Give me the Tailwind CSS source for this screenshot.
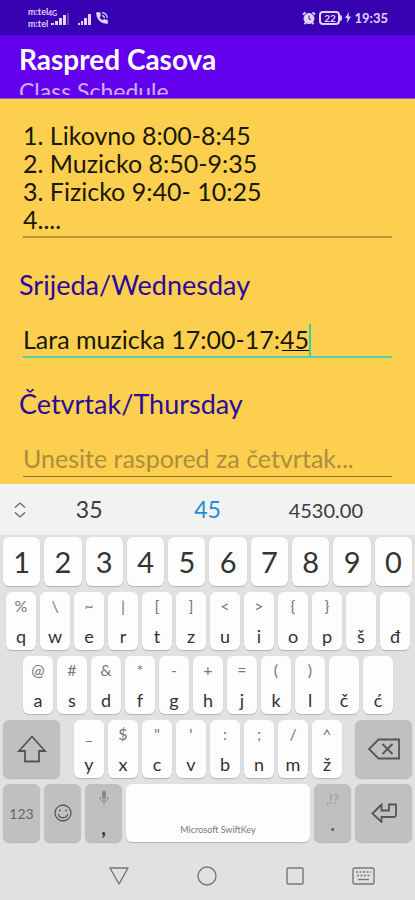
<!DOCTYPE html>
<html lang="bs">
<head>
<meta charset="utf-8">
<meta name="viewport" content="width=device-width, initial-scale=1">
<title>Raspred Casova</title>
<script src="https://cdn.jsdelivr.net/npm/@tailwindcss/browser@4"></script>
</head>
<body class="min-h-screen flex flex-col bg-[#e1e1e1] font-['Lato','Noto_Sans',sans-serif] text-[#333]">

<!-- System status bar -->
<div class="h-[35px] shrink-0 bg-[#3700b0] flex items-center justify-between pl-7 pr-[27px] text-[#e0d4fa]">
  <div class="flex items-center">
    <div class="flex flex-col text-[9px] leading-3 font-bold"><span>m:tel</span><span>m:tel</span></div>
    <svg class="w-[22px] h-5" viewBox="0 0 22 20" fill="currentColor" aria-hidden="true">
      <text x="0" y="8" font-size="7" font-weight="700">4G</text>
      <path d="M3 15h3v2H3zM7 13h3v4H7zM11 10h3v7h-3zM15 7h3v10h-3z"/><path opacity=".3" d="M19 5h2v12h-2z"/>
    </svg>
    <svg class="w-[14px] h-5 ml-2" viewBox="0 0 14 20" fill="currentColor" aria-hidden="true">
      <path d="M0 15h2v2H0zM3 13h2v4H3zM6 10h3v7H6zM10 6h3v11h-3z"/>
    </svg>
    <svg class="w-[14px] h-[14px] ml-[3px]" viewBox="0 0 24 24" fill="currentColor" aria-hidden="true">
      <path stroke="currentColor" stroke-width="2" d="M20 15.500c-1.200 0-2.400-.2-3.600-.6-.3-.1-.7 0-1 .2l-2.200 2.200c-2.800-1.400-5.100-3.800-6.600-6.600l2.200-2.200c.3-.3.400-.7.200-1-.3-1.100-.5-2.300-.5-3.500 0-.6-.4-1-1-1H4c-.6 0-1 .4-1 1 0 9.400 7.600 17 17 17 .6 0 1-.4 1-1v-3.500c0-.6-.4-1-1-1z"/>
      <path fill="none" stroke="currentColor" stroke-width="2.200" d="M12 8a4 4 0 0 1 4 4M12 3a9 9 0 0 1 9 9"/>
    </svg>
  </div>
  <div class="flex items-center">
    <svg class="w-[14px] h-[14px]" viewBox="0 0 14 14" fill="none" stroke="currentColor" aria-hidden="true">
      <circle cx="7" cy="7.500" r="5" fill="currentColor"/><path stroke-width="2" d="M1 3.500l2.500-2M13 3.500l-2.500-2M2.500 13l1.500-1.500M11.500 13l-1.500-1.500"/><path stroke="#3700b0" d="M7 4.500v3.300l2 1"/>
    </svg>
    <div class="ml-[3px] w-[21px] h-[14px] rounded-[4px] border-2 border-current text-[10px] leading-[10px] text-center font-bold">22</div>
    <div class="w-[2px] h-[6px] bg-current rounded-r"></div>
    <svg class="w-[6px] h-[11px] mx-[3px]" viewBox="0 0 6 11" fill="currentColor" aria-hidden="true"><path d="M4 0L0 6h2.500L2 11l4-6.500H3.500z"/></svg>
    <time class="text-[13px] leading-4 font-bold">19:35</time>
  </div>
</div>

<!-- App bar -->
<header class="h-16 shrink-0 bg-[#6200ee] text-white px-[19px] pt-2 border-b border-[#9a63b8]">
  <h1 class="text-[28px] leading-8 font-bold">Raspred Casova</h1>
  <p class="h-5 overflow-hidden text-[23px] leading-8 text-white/70">Class Schedule</p>
</header>

<!-- Schedule form -->
<main class="shrink-0 bg-[#fcd04e] px-[19px] pt-[22px] pb-[7px] text-[#1a1608]">
  <div class="mx-1">
    <textarea aria-label="Utorak/Tuesday" rows="4" class="block w-full resize-none overflow-hidden outline-none border-b-2 border-[#b8953b] h-[117px] text-[25px] leading-7">1. Likovno 8:00-8:45
2. Muzicko 8:50-9:35
3. Fizicko 9:40- 10:25
4....</textarea>
  </div>
  <label for="wed" class="block mt-[31px] text-[27px] leading-8 text-[#2b0a9c]">Srijeda/Wednesday</label>
  <div class="mx-1 mt-5 border-b-2 border-[#4fd3a5] h-[37px]">
    <div class="relative w-fit">
      <input id="wed" type="text" value="Lara muzicka 17:00-17:45" class="block field-sizing-content outline-none text-[25px] leading-9 h-9">
      <span class="absolute right-0 bottom-[6px] w-[27px] h-px bg-black"></span>
      <span class="absolute -right-[2px] bottom-[1px] w-[2px] h-8 bg-[#35cfa5]"></span>
    </div>
  </div>
  <label for="thu" class="block mt-[30px] text-[27px] leading-8 text-[#2b0a9c]">Četvrtak/Thursday</label>
  <div class="mx-1 mt-5 border-b border-[#8d7433]">
    <input id="thu" type="text" placeholder="Unesite raspored za četvrtak..." class="block w-full outline-none text-[25px] leading-9 h-9 placeholder:text-[#a98e3f]">
  </div>
</main>

<!-- Keyboard suggestions -->
<div class="h-[51px] shrink-0 bg-[#f2f2f2] flex items-center pl-[14px] pr-[30px] text-[23px] text-[#3c3c3c]">
  <button aria-label="Proširi" class="w-3"><svg class="w-3 h-4" viewBox="0 0 12 16" fill="none" stroke="#666" stroke-width="1.300" aria-hidden="true"><path d="M1 5.500l5-4.500 5 4.500M1 10.500l5 4.500 5-4.500"/></svg></button>
  <div class="flex-1 grid grid-cols-3 items-center pl-1">
    <button>35</button><button class="text-[#1a8fd6]">45</button><button class="text-[20px]">4530.00</button>
  </div>
</div>

<!-- Keyboard -->
<div class="pt-[2px] shrink-0 flex flex-col gap-[6px] [&_button]:rounded-[6px] [&_button]:shadow-[0_1px_1px_rgba(0,0,0,0.2)]">
  <div class="grid grid-cols-10 gap-1 px-[3px] text-[29px] [&>button]:h-[49px] [&>button]:bg-[#fdfdfd]">
    <button>1</button><button>2</button><button>3</button><button>4</button><button>5</button><button>6</button><button>7</button><button>8</button><button>9</button><button>0</button>
  </div>
  <div class="grid grid-cols-12 gap-1 pl-[6px] pr-[5px] text-[18px] [&>button]:h-[58px] [&>button]:bg-[#fdfdfd] [&>button]:flex [&>button]:flex-col [&>button]:items-center [&>button]:pt-1 [&_span]:h-7 [&_span]:text-[16px] [&_span]:leading-5 [&_span]:text-[#777]">
    <button><span>%</span>q</button><button><span>\</span>w</button><button><span>~</span>e</button><button><span>|</span>r</button><button><span>[</span>t</button><button><span>]</span>z</button><button><span>&lt;</span>u</button><button><span>&gt;</span>i</button><button><span>{</span>o</button><button><span>}</span>p</button><button><span></span>š</button><button><span></span>đ</button>
  </div>
  <div class="grid grid-cols-11 gap-1 pl-[23px] pr-[22px] text-[18px] [&>button]:h-[58px] [&>button]:bg-[#fdfdfd] [&>button]:flex [&>button]:flex-col [&>button]:items-center [&>button]:pt-1 [&_span]:h-7 [&_span]:text-[16px] [&_span]:leading-5 [&_span]:text-[#777]">
    <button><span>@</span>a</button><button><span>#</span>s</button><button><span>&amp;</span>d</button><button><span>*</span>f</button><button><span>-</span>g</button><button><span>+</span>h</button><button><span>=</span>j</button><button><span>(</span>k</button><button><span>)</span>l</button><button><span></span>č</button><button><span></span>ć</button>
  </div>
  <div class="flex px-[3px] text-[18px]">
    <button aria-label="Shift" class="w-[57px] h-[58px] bg-[#c0c0c0] flex items-center justify-center"><svg class="w-[30px] h-7" viewBox="0 0 30 28" fill="none" stroke="#555" stroke-width="1.800" aria-hidden="true"><path d="M15 1.500L28 16h-6v10.500H8V16H2z"/></svg></button>
    <div class="flex-1 ml-[14px] mr-[13px] grid grid-cols-8 gap-1 [&>button]:h-[58px] [&>button]:bg-[#fdfdfd] [&>button]:flex [&>button]:flex-col [&>button]:items-center [&>button]:pt-1 [&_span]:h-7 [&_span]:text-[16px] [&_span]:leading-5 [&_span]:text-[#777]">
      <button><span>_</span>y</button><button><span>$</span>x</button><button><span>"</span>c</button><button><span>'</span>v</button><button><span>:</span>b</button><button><span>;</span>n</button><button><span>/</span>m</button><button><span>^</span>ž</button>
    </div>
    <button aria-label="Obriši" class="w-[57px] h-[58px] bg-[#c0c0c0] flex items-center justify-center"><svg class="w-[34px] h-[22px]" viewBox="0 0 34 22" fill="none" stroke="#555" stroke-width="1.800" aria-hidden="true"><path d="M11.500 1.500H32v19H11.500L2 11zM15.500 6l10 10M25.500 6l-10 10"/></svg></button>
  </div>
  <div class="flex gap-1 px-[3px] [&>button]:h-[58px]">
    <button class="w-[37px] bg-[#c0c0c0] text-[14px] text-[#666]">123</button>
    <button aria-label="Emoji" class="w-[37px] bg-[#c0c0c0] flex items-center justify-center"><svg class="w-[18px] h-[18px]" viewBox="0 0 18 18" fill="none" stroke="#555" stroke-width="1.300" aria-hidden="true"><circle cx="9" cy="9" r="8"/><path d="M4.500 10c.5 5 8.500 5 9 0"/><circle cx="6" cy="6.500" r=".9" fill="#555" stroke="none"/><circle cx="12" cy="6.500" r=".9" fill="#555" stroke="none"/></svg></button>
    <button aria-label="Zarez" class="w-[37px] bg-[#c0c0c0] flex flex-col items-center pt-[6px] text-[20px]"><svg class="w-[10px] h-[15px] mb-3" viewBox="0 0 10 15" fill="none" stroke="#888" aria-hidden="true"><rect x="3.500" y="1" width="3" height="8" rx="1.500" fill="#888"/><path d="M.7 7c0 5.500 8.600 5.500 8.600 0M5 11v4"/></svg><b class="leading-5">,</b></button>
    <button class="flex-1 bg-[#fdfdfd] flex items-end justify-center pb-[6px] text-[9px] leading-3 text-[#777]">Microsoft SwiftKey</button>
    <button class="w-[37px] bg-[#c0c0c0] flex flex-col items-center pt-[5px] text-[20px] text-[#666]"><span class="text-[14px] leading-5 h-6 text-[#999]">,!?</span><b class="leading-5">.</b></button>
    <button aria-label="Enter" class="w-[57px] bg-[#c0c0c0] flex items-center justify-center"><svg class="w-[26px] h-[20px]" viewBox="0 0 26 20" fill="none" stroke="#555" stroke-width="1.800" aria-hidden="true"><path d="M1.500 10.500L10.500 1.500V7.500H18V1.500H25V11.500Q25 14 22.500 14H10.500V19z"/></svg></button>
  </div>
</div>

<!-- System navigation -->
<nav class="flex-1 min-h-14 flex items-center pt-[10px] pl-[109px] pr-10 justify-between">
  <button aria-label="Nazad"><svg class="w-5 h-[18px]" viewBox="0 0 20 18" fill="none" stroke="#777" stroke-width="1.400" stroke-linejoin="round" aria-hidden="true"><path d="M1 1h18l-9 16z"/></svg></button>
  <button aria-label="Početna" class="ml-5"><svg class="w-5 h-5" viewBox="0 0 20 20" fill="none" stroke="#777" stroke-width="1.400" aria-hidden="true"><circle cx="10" cy="10" r="9"/></svg></button>
  <button aria-label="Nedavno" class="ml-5"><svg class="w-[18px] h-[18px]" viewBox="0 0 18 18" fill="none" stroke="#777" stroke-width="1.400" aria-hidden="true"><rect x="1" y="1" width="16" height="16" rx="1"/></svg></button>
  <button aria-label="Tastatura"><svg class="w-[23px] h-[18px]" viewBox="0 0 23 18" fill="none" stroke="#777" stroke-width="1.400" aria-hidden="true"><rect x="1" y="1" width="21" height="16" rx="1.500"/><path stroke-dasharray="2 1.500" d="M4 5h15M5 8.500h13"/><path d="M6 12.500h11"/></svg></button>
</nav>
</body>
</html>
